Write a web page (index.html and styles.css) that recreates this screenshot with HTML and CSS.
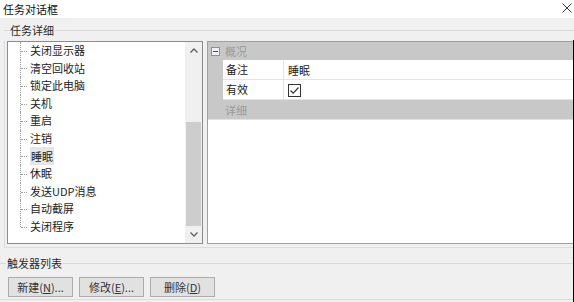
FILE: index.html
```html
<!DOCTYPE html>
<html lang="zh">
<head>
<meta charset="utf-8">
<title>任务对话框</title>
<link rel="stylesheet" href="styles.css">
</head>
<body>
<div class="window">
  <div class="titlebar">
    <span class="title">任务对话框</span>
    <svg class="close" width="10" height="10" viewBox="0 0 10 10"><path d="M0.5 0.5 L9.5 9.5 M9.5 0.5 L0.5 9.5" stroke="#3a3a3a" stroke-width="1" fill="none"/></svg>
  </div>
  <div class="dialog">
    <div class="group group-detail">
      <div class="legend"><span>任务详细</span></div>
      <div class="group-body">
        <div class="tree">
          <ul class="tree-list">
            <li>关闭显示器</li>
            <li>清空回收站</li>
            <li>锁定此电脑</li>
            <li>关机</li>
            <li>重启</li>
            <li>注销</li>
            <li><span class="sel">睡眠</span></li>
            <li>休眠</li>
            <li>发送UDP消息</li>
            <li>自动截屏</li>
            <li>关闭程序</li>
          </ul>
          <div class="vscroll">
            <div class="arrow"><svg width="8" height="5" viewBox="0 0 8 5"><polyline points="0.5,4.5 4,1 7.5,4.5" stroke="#606060" stroke-width="1.3" fill="none"/></svg></div>
            <div class="track"><div class="thumb"></div></div>
            <div class="arrow"><svg width="8" height="5" viewBox="0 0 8 5"><polyline points="0.5,0.5 4,4 7.5,0.5" stroke="#606060" stroke-width="1.3" fill="none"/></svg></div>
          </div>
        </div>
        <div class="propgrid">
          <div class="pg-cat">
            <span class="pg-toggle"><span class="pg-minus"></span></span>
            <span class="pg-cat-label">概况</span>
          </div>
          <div class="pg-row">
            <div class="pg-gutter"></div>
            <div class="pg-name">备注</div>
            <div class="pg-value">睡眠</div>
          </div>
          <div class="pg-row">
            <div class="pg-gutter"></div>
            <div class="pg-name">有效</div>
            <div class="pg-value">
              <span class="checkbox"><svg width="11" height="11" viewBox="0 0 11 11"><polyline points="1.5,5.5 4.2,8.2 9.5,2.5" stroke="#333" stroke-width="1.2" fill="none"/></svg></span>
            </div>
          </div>
          <div class="pg-cat pg-cat-plain"><span class="pg-cat-label">详细</span></div>
          <div class="pg-empty"></div>
        </div>
      </div>
    </div>
    <div class="group group-triggers">
      <div class="legend"><span>触发器列表</span></div>
      <div class="buttons">
        <button class="btn">新建(<u>N</u>)...</button>
        <button class="btn">修改(<u>E</u>)...</button>
        <button class="btn">删除(<u>D</u>)</button>
      </div>
    </div>
    <div class="edge"></div>
  </div>
</div>
</body>
</html>
```

FILE: styles.css
```css
* { box-sizing: border-box; }

html, body {
  margin: 0;
  padding: 0;
}

body {
  font-family: "Noto Sans CJK SC", "Noto Sans", sans-serif;
  font-size: 11px;
  color: #222222;
  background: #f0f0f0;
}

.window {
  width: 574px;
  height: 302px;
  overflow: hidden;
  display: flex;
  flex-direction: column;
  background: #f0f0f0;
}

.titlebar {
  height: 18px;
  background: #ffffff;
  display: flex;
  align-items: center;
  justify-content: space-between;
  padding: 0 2px 0 3px;
}

.title {
  line-height: 16px;
  color: #111;
}

.close {
  display: block;
  margin-top: -2px;
}

.dialog {
  position: relative;
  flex: 1;
  display: flex;
  flex-direction: column;
}

.edge {
  position: absolute;
  right: 0;
  top: 22px;
  bottom: 0;
  width: 1px;
  background: #000;
}

.legend {
  height: 14px;
  display: flex;
  align-items: center;
  color: #2a2a2a;
  line-height: 14px;
}

.legend::before {
  content: "";
  width: 5px;
  border-top: 1px solid #d9d9d9;
}

.legend::after {
  content: "";
  flex: 1;
  border-top: 1px solid #d9d9d9;
}

.legend span {
  padding: 0 1px;
}

.group-detail {
  margin-left: 4px;
  margin-top: 5px;
}

.group-body {
  border-left: 1px solid #dcdcdc;
  border-bottom: 1px solid #dcdcdc;
  margin-top: 4px;
  padding: 0 0 3px 2px;
  display: flex;
  gap: 4px;
}

.tree {
  width: 196px;
  height: 203px;
  border: 1px solid #8c8c8c;
  background: #ffffff;
  display: flex;
}

.tree-list {
  flex: 1;
  list-style: none;
  margin: 0;
  padding: 0;
}

.tree-list li {
  position: relative;
  height: 17.6px;
  line-height: 16.6px;
  padding-left: 22px;
  white-space: nowrap;
}

.tree-list li::before {
  content: "";
  position: absolute;
  left: 12px;
  top: 0;
  bottom: 0;
  border-left: 1px dotted #a0a0a0;
}

.tree-list li:last-child::before {
  bottom: 50%;
}

.tree-list li::after {
  content: "";
  position: absolute;
  left: 13px;
  top: 50%;
  width: 6px;
  border-top: 1px dotted #a0a0a0;
}

.sel {
  background: #e6e6e6;
  padding: 1px 1px;
}

.vscroll {
  width: 17px;
  display: flex;
  flex-direction: column;
  background: #f0f0f0;
}

.arrow {
  height: 17px;
  display: flex;
  align-items: center;
  justify-content: center;
}

.arrow svg {
  display: block;
}

.track {
  flex: 1;
  display: flex;
  flex-direction: column;
  justify-content: flex-end;
  padding: 0 1px 0 1px;
}

.thumb {
  height: 104px;
  background: #cdcdcd;
}

.propgrid {
  flex: 1;
  height: 203px;
  border: 1px solid #a0a0a0;
  border-right: none;
  background: #ffffff;
  display: flex;
  flex-direction: column;
}

.pg-cat {
  height: 18px;
  background: #c8c8c8;
  display: flex;
  align-items: center;
}

.pg-toggle {
  width: 9px;
  height: 9px;
  margin-left: 3px;
  border: 1px solid #8e8f9a;
  background: #eef0f6;
  display: flex;
  align-items: center;
  justify-content: center;
}

.pg-minus {
  width: 5px;
  height: 1px;
  background: #4a4a60;
}

.pg-cat-label {
  margin-left: 5px;
  color: #9a9a9a;
  line-height: 16px;
}

.pg-cat-plain {
  height: 20px;
  border-bottom: 1px solid #e2e2e2;
  padding-left: 12px;
}

.pg-row {
  height: 20px;
  display: flex;
  background: #c8c8c8;
}

.pg-gutter {
  width: 15px;
}

.pg-name {
  width: 61px;
  background: #ffffff;
  border-bottom: 1px solid #e4e4e4;
  border-right: 1px solid #e4e4e4;
  padding-left: 3px;
  line-height: 18px;
}

.pg-value {
  flex: 1;
  background: #ffffff;
  border-bottom: 1px solid #e4e4e4;
  padding-left: 4px;
  line-height: 18px;
  display: flex;
  align-items: center;
}

.checkbox {
  width: 13px;
  height: 13px;
  border: 1px solid #333333;
  background: #ffffff;
  display: flex;
  align-items: center;
  justify-content: center;
  margin-top: 1px;
}

.checkbox svg {
  display: block;
}

.pg-empty {
  flex: 1;
}

.group-triggers {
  margin-top: 8px;
  border-bottom: 1px solid #dcdcdc;
  padding-bottom: 2px;
}

.group-triggers .legend::before {
  width: 6px;
}

.buttons {
  display: flex;
  gap: 6px;
  margin: 7px 0 0 8px;
}

.btn {
  width: 65px;
  height: 20px;
  padding: 0;
  font-family: "Noto Sans CJK SC", "Noto Sans", sans-serif;
  font-size: 11px;
  line-height: 18px;
  color: #333333;
  background: #e1e1e1;
  border: 1px solid #adadad;
  border-radius: 0;
}
```
